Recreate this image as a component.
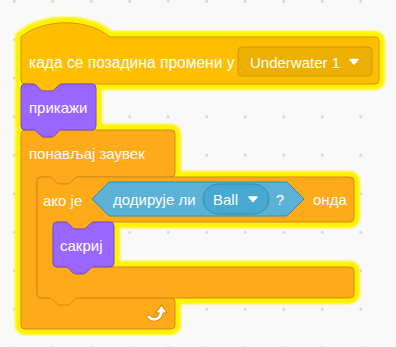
import React from "react";

const notchR = "c 2,0 3,1 4,2 l 3,3 c 1,1 2,2 4,2 h 7 c 2,0 3,-1 4,-2 l 3,-3 c 1,-1 2,-2 4,-2";
const notchL = "c -2,0 -3,1 -4,2 l -3,3 c -1,1 -2,2 -4,2 h -7 c -2,0 -3,-1 -4,-2 l -3,-3 c -1,-1 -2,-2 -4,-2";

const stack = (x, y, w, h) =>
  `M ${x},${y + 4} a 4,4 0 0 1 4,-4 H ${x + 12} ${notchR} H ${x + w - 4} a 4,4 0 0 1 4,4 V ${y + h - 4} a 4,4 0 0 1 -4,4 H ${x + 41} ${notchL} H ${x + 4} a 4,4 0 0 1 -4,-4 Z`;

const cBlock = (L, T, R, y1, IL, y2, y3, tab) =>
  `M ${L},${T + 4} a 4,4 0 0 1 4,-4 H ${L + 12} ${notchR} H ${R - 4} a 4,4 0 0 1 4,4 V ${y1 - 4} a 4,4 0 0 1 -4,4 H ${IL + 41} ${notchL} H ${IL + 4} a 4,4 0 0 0 -4,4 V ${y2 - 4} a 4,4 0 0 0 4,4 H ${R - 4} a 4,4 0 0 1 4,4 V ${y3 - 4} a 4,4 0 0 1 -4,4 ` +
  (tab ? `H ${L + 41} ${notchL} ` : "") +
  `H ${L + 4} a 4,4 0 0 1 -4,-4 Z`;

const hat = `M 21,37 c 22,-19 67,-19 89,0 H 375 a 4,4 0 0 1 4,4 V 80 a 4,4 0 0 1 -4,4 H 62 ${notchL} H 25 a 4,4 0 0 1 -4,-4 Z`;

const blocks = [
  { d: cBlock(21, 130, 175, 177, 37, 298, 329, false), fill: "#FFAB19", stroke: "#CF8B17" },
  { d: cBlock(37, 177, 354, 222, 53, 267, 298, true), fill: "#FFAB19", stroke: "#CF8B17" },
  { d: hat, fill: "#FFBF00", stroke: "#CC9900" },
  { d: stack(21, 84, 75, 46), fill: "#9966FF", stroke: "#774DCB" },
  { d: stack(53, 222, 61, 45), fill: "#9966FF", stroke: "#774DCB" },
];

const Label = ({ x, y, children, anchor = "start", size = 15 }) => (
  <text x={x} y={y} fill="#fff" fontSize={size} dominantBaseline="central" textAnchor={anchor}>
    {children}
  </text>
);

export default function App() {
  return (
    <div className="w-[396px] h-[347px] overflow-hidden bg-[#f9f9f9] bg-[radial-gradient(circle,#d2d2d2_1px,transparent_1.6px)] bg-[length:38.5px_38.5px] bg-[position:-5px_-18px]">
      <svg width="396" height="347" viewBox="0 0 396 347" className="block font-['Liberation_Sans',Arial,sans-serif]">
        <defs>
          <filter id="soft" x="-10%" y="-10%" width="120%" height="120%">
            <feGaussianBlur stdDeviation="1.2" />
          </filter>
        </defs>

        {/* glow */}
        <g filter="url(#soft)">
          {blocks.map((b, i) => (
            <path key={i} d={b.d} fill="#FFF200" stroke="#FFF200" strokeWidth="12" strokeLinejoin="round" />
          ))}
        </g>

        {blocks.map((b, i) => (
          <path key={i} d={b.d} fill={b.fill} stroke={b.stroke} strokeWidth="1" />
        ))}

        {/* hat */}
        <Label x={29} y={62} size={15.6}>када се позадина промени у</Label>
        <rect x="238" y="47" width="134" height="29" rx="4" fill="#EDB000" stroke="#CC9900" />
        <Label x={250} y={62}>Underwater 1</Label>
        <path d="M 350,59.5 h 8 l -4,4.5 z" fill="#fff" stroke="#fff" strokeWidth="1.5" strokeLinejoin="round" />

        <Label x={29} y={107}>прикажи</Label>
        <Label x={29} y={153}>понављај заувек</Label>

        {/* if row */}
        <Label x={43} y={200}>ако је</Label>
        <path d="M 92,199 L 109,182 H 287 L 304,199 L 287,216 H 109 Z" fill="#5CB1D6" stroke="#2E8EB8" />
        <Label x={113} y={199}>додирује ли</Label>
        <rect x="203" y="184" width="66" height="30" rx="15" fill="#47A8D1" stroke="#2E8EB8" />
        <Label x={213} y={199}>Ball</Label>
        <path d="M 249,197 h 8 l -4,4.5 z" fill="#fff" stroke="#fff" strokeWidth="1.5" strokeLinejoin="round" />
        <Label x={280} y={199} anchor="middle">?</Label>
        <Label x={313} y={199}>онда</Label>

        <Label x={60} y={245}>сакриј</Label>

        {/* repeat arrow */}
        <g>
          <path d="M 149,317 c 4,4 11,3 12.5,-5" fill="none" stroke="#CF8B17" strokeWidth="4.5" strokeLinecap="round" />
          <path d="M 156.5,312.5 L 161.5,305.5 L 166.5,312.5 Z" fill="#CF8B17" stroke="#CF8B17" strokeWidth="2" strokeLinejoin="round" />
          <path d="M 149,317 c 4,4 11,3 12.5,-5" fill="none" stroke="#fff" strokeWidth="2.8" strokeLinecap="round" />
          <path d="M 157.5,312 L 161.5,306.5 L 165.5,312 Z" fill="#fff" stroke="#fff" strokeWidth="1" strokeLinejoin="round" />
        </g>
      </svg>
    </div>
  );
}
